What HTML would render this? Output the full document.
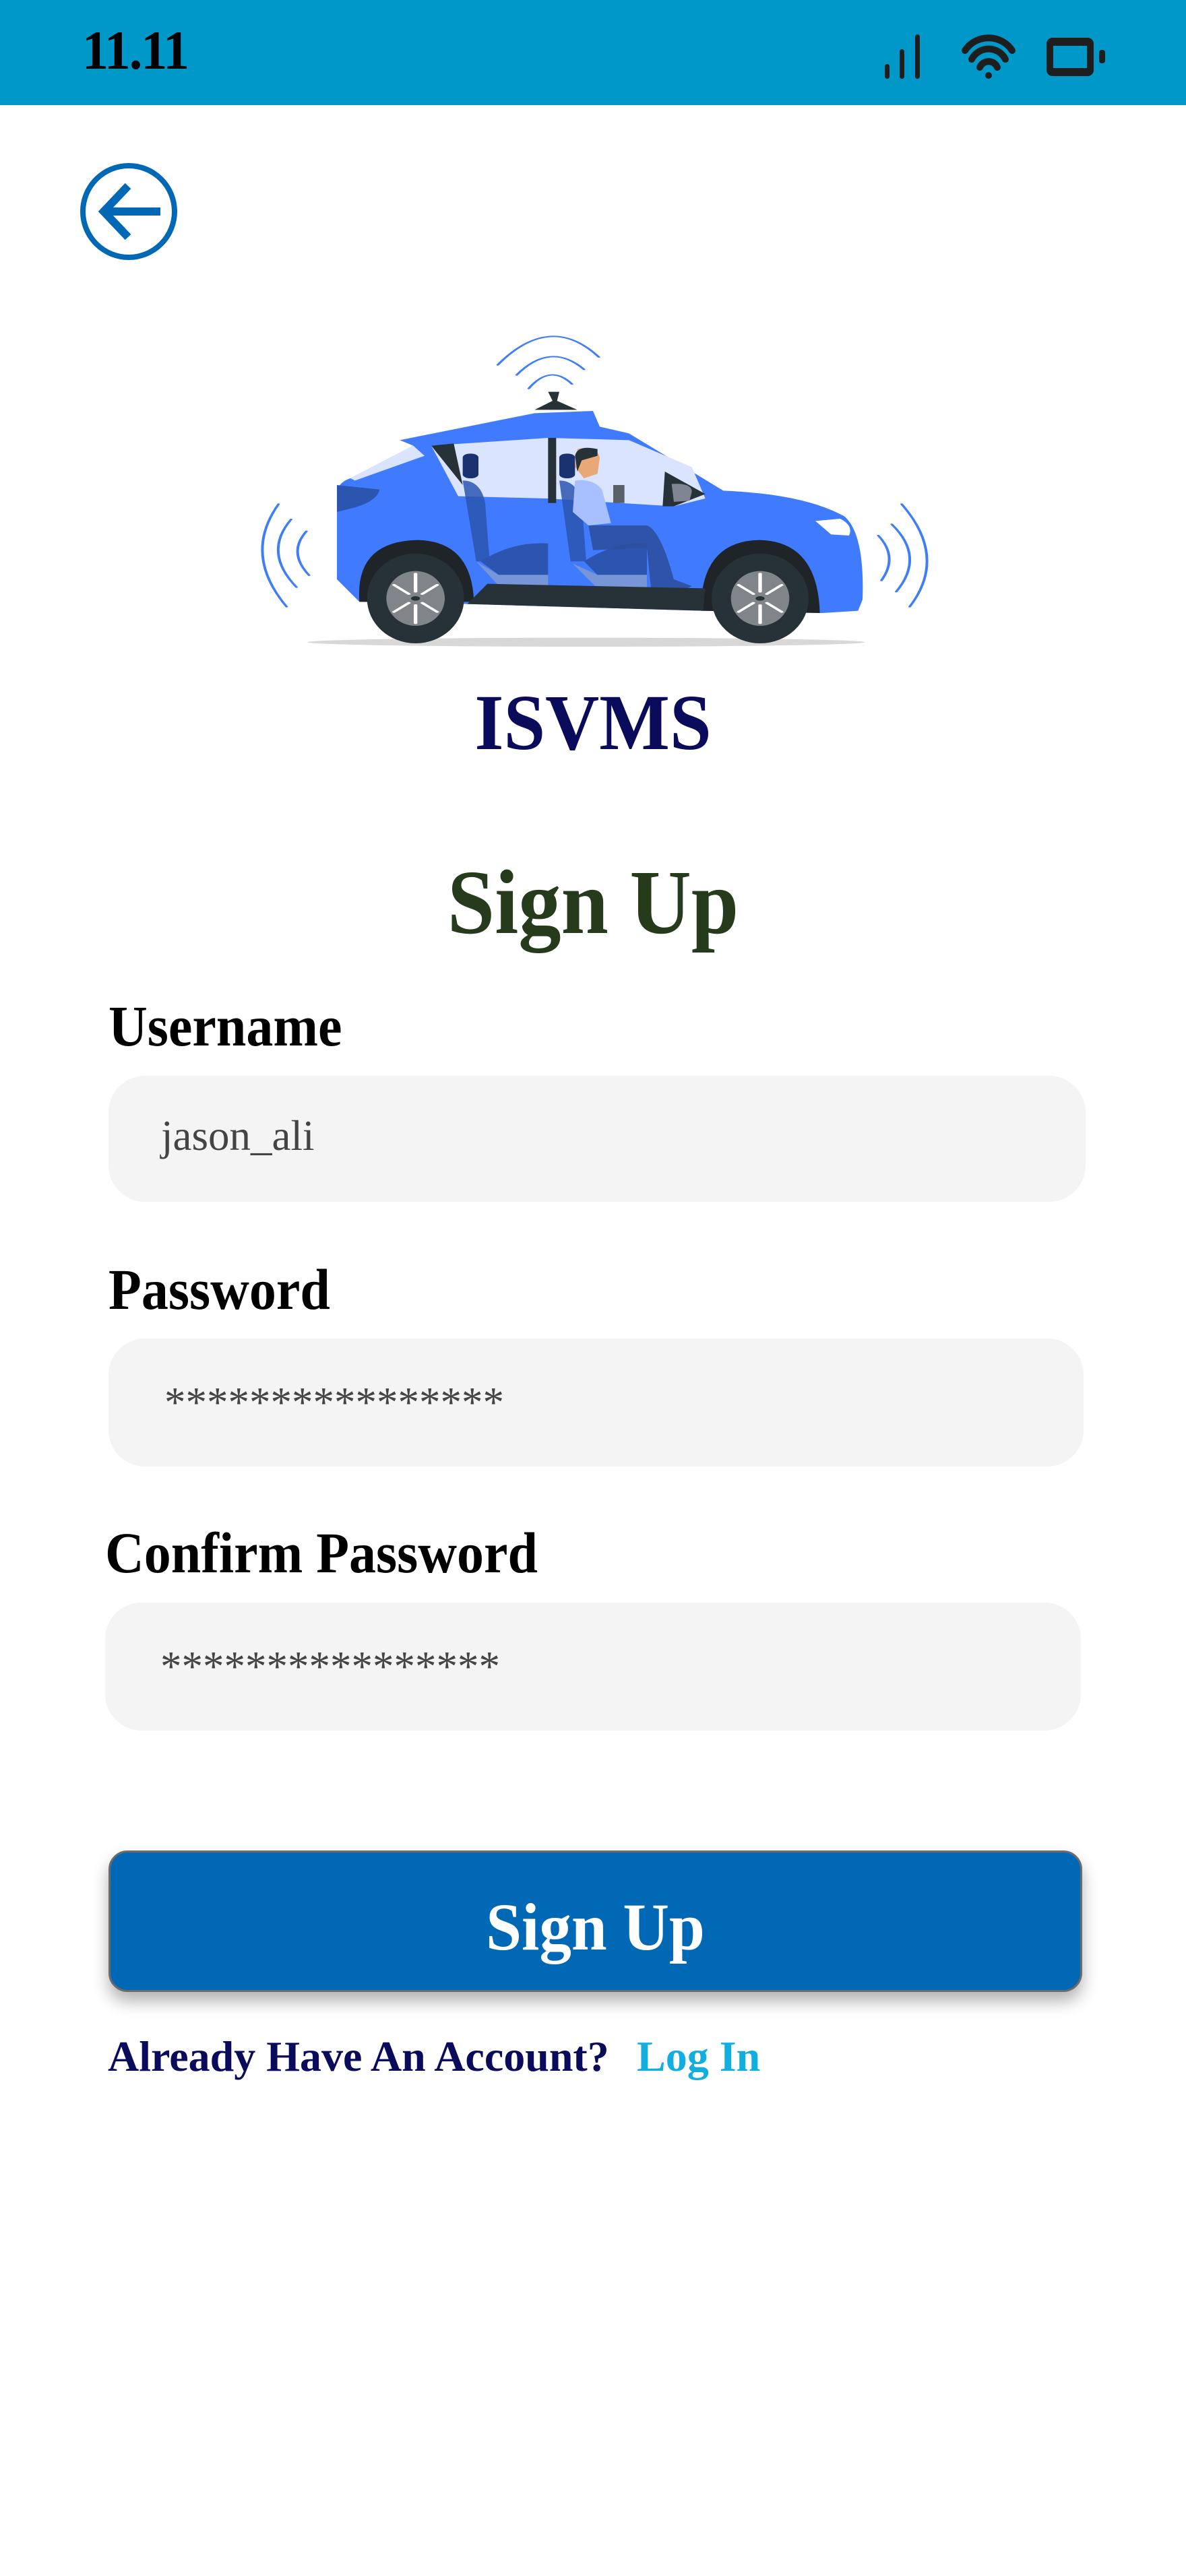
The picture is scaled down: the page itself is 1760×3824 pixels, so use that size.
<!DOCTYPE html>
<html><head><meta charset="utf-8"><style>
html,body{margin:0;padding:0;background:#fff;}
body{width:1760px;height:3824px;position:relative;overflow:hidden;font-family:"Liberation Serif",serif;}
.abs{position:absolute;}
.status{left:0;top:0;width:1760px;height:156px;background:#0097c9;}
.time{left:122px;top:34px;font-size:82px;font-weight:bold;color:#000;line-height:1;letter-spacing:-2px;transform:scaleX(0.95);transform-origin:left;}
.lbl{position:absolute;font-weight:bold;font-size:86px;color:#000;line-height:1;white-space:nowrap;transform:scaleX(0.93);transform-origin:left;}
.inp{position:absolute;background:#f4f4f4;border-radius:54px;}
.inp span{position:absolute;font-size:63px;color:#444;line-height:1;white-space:nowrap;}
</style></head><body>
<div class="abs status"></div>
<div class="abs time">11.11</div>
<svg class="abs" style="left:1300px;top:40px" width="400" height="90" viewBox="1300 40 400 90">
 <g fill="#1e1e1e">
  <rect x="1313" y="95" width="7" height="22" rx="3.5"/>
  <rect x="1335" y="73" width="7" height="44" rx="3.5"/>
  <rect x="1358" y="51" width="7" height="66" rx="3.5"/>
  <rect x="1553" y="56" width="70" height="57" rx="9"/>
  <rect x="1631" y="74" width="9" height="20" rx="4"/>
 </g>
 <rect x="1563" y="68" width="50" height="33" fill="#0097c9"/>
 <g fill="none" stroke="#1e1e1e" stroke-width="10" stroke-linecap="round">
  <path d="M1432 75 A42 42 0 0 1 1502 75"/>
  <path d="M1442 88 A28 28 0 0 1 1492 88"/>
  <path d="M1454 100 A14 14 0 0 1 1480 100"/>
 </g>
 <circle cx="1467" cy="112" r="5" fill="#1e1e1e"/>
</svg>
<svg class="abs" style="left:116px;top:238px" width="150" height="152" viewBox="116 238 150 152">
 <circle cx="191" cy="314" r="68" fill="none" stroke="#0168b5" stroke-width="8"/>
 <path d="M238 314 H155 M190 276 L154 314 L190 352" fill="none" stroke="#0168b5" stroke-width="12" stroke-linejoin="miter"/>
</svg>

<svg class="abs" style="left:360px;top:480px" width="1040" height="500" viewBox="0 0 1560 1500" preserveAspectRatio="none">
 <ellipse cx="765" cy="1420" rx="620" ry="20" fill="#d8d8d8"/>
 <g fill="none" stroke="#3f7ef7" stroke-width="6" stroke-linecap="round">
  <path d="M568 185 Q685 -50 793 150"/>
  <path d="M610 230 Q685 80 760 205"/>
  <path d="M637 290 Q685 180 733 270"/>
  <path d="M98 1262 Q0 1030 80 805"/>
  <path d="M120 1175 Q45 1020 108 873"/>
  <path d="M148 1122 Q100 1020 142 926"/>
  <path d="M1467 805 Q1570 1040 1485 1262"/>
  <path d="M1445 895 Q1520 1040 1455 1195"/>
  <path d="M1415 945 Q1460 1040 1422 1145"/>
 </g>
 <path d="M680 305 H705 L700 345 L745 385 H650 L690 345 Z" fill="#263238"/>
 <path d="M210 760 Q210 710 240 690 L380 545 L350 520 L650 400 L780 390 L795 460 L860 490 L1070 745 Q1250 760 1340 860 Q1385 940 1380 1230 L1370 1280 L1290 1290 L1020 1280 L500 1250 L260 1240 L210 1140 Z" fill="#407bff"/>
 <path d="M420 545 L680 510 L860 520 L1000 640 L1030 780 L960 815 L680 780 L480 770 Z" fill="#dbe4ff"/>
 <path d="M420 545 L470 535 L490 720 Z" fill="#263238"/>
 <rect x="680" y="510" width="18" height="290" fill="#263238"/>
 <path d="M940 660 L1030 760 L960 815 L935 815 Z" fill="#263238"/>
 <path d="M955 715 Q1000 710 1000 750 L995 790 L960 795 Z" fill="#7f8590"/>
 <path d="M240 690 L380 545 L405 590 L250 700 Z" fill="#dbe4ff"/>
 <path d="M210 720 L305 740 Q300 790 250 820 L210 840 Z" fill="#2c55b0"/>
 <path d="M1275 880 L1330 870 Q1360 900 1350 945 L1310 940 Z" fill="#fff"/>
 <rect x="490" y="580" width="35" height="110" rx="17" fill="#1a3270"/>
 <rect x="705" y="580" width="35" height="110" rx="17" fill="#1a3270"/>
 <path d="M490 700 Q530 700 540 800 L550 1060 L520 1060 Z" fill="#2c55b0" opacity=".85"/>
 <path d="M705 700 Q745 700 755 800 L765 1060 L730 1060 Z" fill="#2c55b0" opacity=".85"/>
 <path d="M530 1060 Q600 970 680 980 L680 1120 L570 1120 Z" fill="#2c55b0"/>
 <path d="M760 1060 Q830 970 900 980 L900 1120 L790 1120 Z" fill="#2c55b0"/>
 <path d="M520 1060 L570 1120 L680 1120 L680 1180 L580 1190 Z" fill="#7895d8"/>
 <path d="M735 1070 L790 1120 L900 1120 L900 1190 L800 1200 Z" fill="#7895d8"/>
 <path d="M745 560 Q790 540 795 600 L790 670 L760 690 L740 640 Z" fill="#e8a878"/>
 <path d="M740 590 Q745 540 790 560 L790 590 L755 610 L745 660 Z" fill="#263238"/>
 <path d="M740 700 Q780 690 800 740 L820 890 L770 900 L735 840 Z" fill="#a8c0ff"/>
 <rect x="825" y="720" width="25" height="80" fill="#5a5f68"/>
 <path d="M770 900 L900 900 Q930 920 960 1140 L1000 1170 L960 1210 L910 1200 L900 1000 L780 1010 Z" fill="#2e4f9e" opacity=".9"/>
 <path d="M260 1240 Q250 970 390 965 Q510 970 515 1240 Z" fill="#1e2428"/>
 <path d="M1020 1280 Q1020 970 1150 965 Q1280 970 1285 1290 Z" fill="#1e2428"/>
 <path d="M500 1250 L1025 1280 L1030 1180 L545 1160 Z" fill="#263238"/>
 <ellipse cx="385" cy="1225" rx="108" ry="200" fill="#263238"/>
 <ellipse cx="385" cy="1225" rx="65" ry="122" fill="#7f8588"/>
 <ellipse cx="1152" cy="1225" rx="108" ry="200" fill="#263238"/>
 <ellipse cx="1152" cy="1225" rx="65" ry="122" fill="#7f8588"/>
 <g stroke="#fff" stroke-width="8" stroke-linecap="round">
  <path d="M385 1115 V1195 M385 1255 V1335 M337 1165 L370 1205 M400 1245 L433 1285 M337 1285 L370 1245 M400 1205 L433 1165"/>
  <path d="M1152 1115 V1195 M1152 1255 V1335 M1104 1165 L1137 1205 M1167 1245 L1200 1285 M1104 1285 L1137 1245 M1167 1205 L1200 1165"/>
 </g>
 <circle cx="385" cy="1225" r="10" fill="#263238"/><circle cx="1152" cy="1225" r="10" fill="#263238"/>
</svg>

<div class="abs" style="left:0;width:1760px;top:1008px;text-align:center;font-size:118px;font-weight:bold;color:#0b0b5c;line-height:1.1;transform:scaleX(0.94);transform-origin:center;">ISVMS</div>
<div class="abs" style="left:0;width:1760px;top:1266px;text-align:center;font-size:136px;font-weight:bold;color:#263a1c;line-height:1.1;transform:scaleX(0.93);transform-origin:center;">Sign Up</div>

<div class="lbl" style="left:161px;top:1480px;">Username</div>
<div class="inp" style="left:161px;top:1597px;width:1450px;height:187px;"><span style="left:78px;top:58px;">jason_ali</span></div>
<div class="lbl" style="left:161px;top:1871px;">Password</div>
<div class="inp" style="left:161px;top:1987px;width:1447px;height:190px;"><span style="left:83px;top:64px;">****************</span></div>
<div class="lbl" style="left:156px;top:2262px;">Confirm Password</div>
<div class="inp" style="left:156px;top:2379px;width:1448px;height:190px;"><span style="left:82px;top:64px;">****************</span></div>

<div class="abs" style="left:161px;top:2747px;width:1439px;height:204px;background:#0068b5;border:3px solid #6b6b6b;border-radius:28px;box-shadow:0 14px 24px rgba(0,0,0,.3);"></div>
<div class="abs" style="left:161px;width:1445px;top:2806px;text-align:center;font-size:100px;font-weight:bold;color:#fff;line-height:1.1;transform:scaleX(0.95);transform-origin:center;">Sign Up</div>

<div class="abs" style="left:160px;top:3021px;font-size:64px;font-weight:bold;color:#0b0b5c;line-height:1;white-space:nowrap;">Already Have An Account?</div>
<div class="abs" style="left:945px;top:3021px;font-size:64px;font-weight:bold;color:#12aee0;line-height:1;white-space:nowrap;">Log In</div>
</body></html>
